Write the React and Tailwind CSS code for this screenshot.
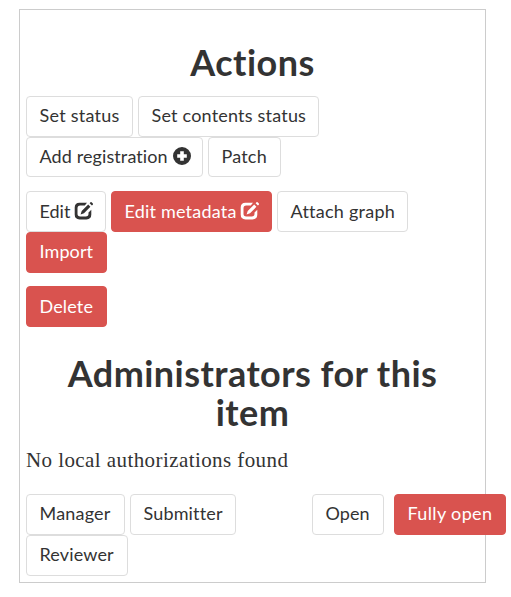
function PlusIcon() {
  return (
    <svg viewBox="0 0 18 18" className="h-[18px] w-[18px] shrink-0" aria-hidden="true">
      <path
        fill="currentColor"
        fillRule="evenodd"
        d="M9 0a9 9 0 1 1 0 18A9 9 0 0 1 9 0ZM7.2 4.2v3H4.2v3.6h3v3h3.6v-3h3V7.2h-3V4.2Z"
      />
    </svg>
  );
}

function EditIcon() {
  return (
    <svg viewBox="0 0 20 18" className="h-[18px] w-[20px] shrink-0" aria-hidden="true">
      <path
        fill="currentColor"
        d="M5.5 .8H13L10.8 3.5H6.2Q3.5 3.5 3.5 6.2V11.8Q3.5 14.5 6.2 14.5H11.8Q14.5 14.5 14.5 11.8V10.5L17.3 7.8V12.6Q17.3 17.4 12.5 17.4H5.5Q.7 17.4 .7 12.6V5.6Q.7 .8 5.5 .8Z"
      />
      <path fill="currentColor" d="M14.2 2.6 16.4 4.8 10 11.3 6.6 12.4 7.7 9.1ZM15.6 1.2 16.5.3Q17.2-.2 17.9.5L18.8 1.4Q19.3 2 18.8 2.7L17.9 3.6Z" />
    </svg>
  );
}

function Button({ className, text, danger, icon, low, children }) {
  return (
    <button
      className={`flex shrink-0 items-center justify-between rounded-[4px] border pr-[11px] pl-[12.5px] text-left text-[18px] leading-[26px] whitespace-nowrap ${
        low ? "pb-px" : "pb-[3px]"
      } ${
        danger ? "border-[#d9534f] bg-[#d9534f] text-white" : "border-[#dddddd] bg-white text-[#333333]"
      } ${className}`}
    >
      <span className={text}>{children}</span>
      {icon}
    </button>
  );
}

export default function App() {
  return (
    <div className="h-[597px] w-[511px] bg-white pt-[9px] pl-[19px] font-['Lato',sans-serif] text-[#333333]">
      <section className="h-[574px] w-[467px] border border-[#cccccc] pt-[33px] pl-[6px]">
        <h2 className="w-[453px] text-center text-[36px] leading-[39px] font-bold tracking-[0.5px]">Actions</h2>
        <div className="mt-[14px] flex gap-[5px]">
          <Button className="h-[41px] w-[107px]" text="tracking-[0.25px]">Set status</Button>
          <Button className="h-[41px] w-[181px]" text="tracking-[0.2px]">Set contents status</Button>
        </div>
        <div className="flex gap-[5px]">
          <Button className="h-[40px] w-[177px]" text="tracking-[0.1px]" icon={<PlusIcon />}>Add registration</Button>
          <Button className="h-[40px] w-[73px]" text="tracking-[0.2px]">Patch</Button>
        </div>
        <div className="mt-[14px] flex gap-[5px]">
          <Button low className="h-[41px] w-[80px]" text="tracking-normal" icon={<EditIcon />}>Edit</Button>
          <Button low danger className="h-[41px] w-[161px]" text="tracking-[0.2px]" icon={<EditIcon />}>Edit metadata</Button>
          <Button low className="h-[41px] w-[131px]" text="tracking-[0.25px]">Attach graph</Button>
        </div>
        <Button danger className="h-[41px] w-[81px]" text="tracking-[0.1px]">Import</Button>
        <Button low danger className="mt-[13px] h-[41px] w-[81px]" text="tracking-[0.15px]">Delete</Button>

        <h2 className="mt-[27px] w-[453px] px-[26px] text-center text-[36px] leading-[39px] font-bold tracking-[0.45px]">
          Administrators for this item
        </h2>
        <p className="mt-[13px] font-['Liberation_Serif',serif] text-[21px] leading-[30px] tracking-[0.42px]">No local authorizations found</p>
        <div className="mt-[19px] flex">
          <div className="w-[286px] shrink-0">
            <div className="flex gap-[5px]">
              <Button className="h-[41px] w-[99px]" text="tracking-[0.2px]">Manager</Button>
              <Button className="h-[41px] w-[106px]" text="tracking-[0.15px]">Submitter</Button>
            </div>
            <Button className="h-[41px] w-[102px]" text="tracking-[0.15px]">Reviewer</Button>
          </div>
          <div className="flex shrink-0 gap-[10px]">
            <Button className="h-[41px] w-[72px]" text="tracking-[0.1px]">Open</Button>
            <Button danger className="h-[41px] w-[112px]" text="tracking-[0.35px]">Fully open</Button>
          </div>
        </div>
      </section>
    </div>
  );
}
